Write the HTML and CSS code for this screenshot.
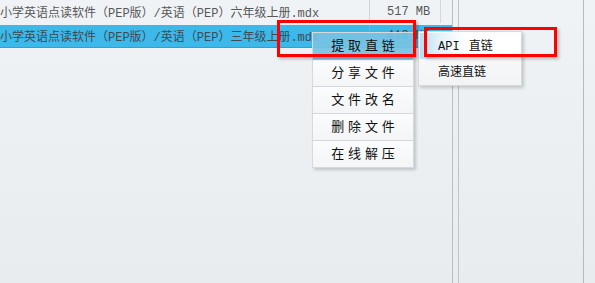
FILE: index.html
```html
<!DOCTYPE html>
<html lang="zh-CN">
<head>
<meta charset="utf-8">
<link rel="stylesheet" href="styles.css">
</head>
<body>
<div class="window">
  <div class="list">
    <div class="row">
      <div class="cell name">小学英语点读软件（PEP版）/英语（PEP）六年级上册.mdx</div>
      <div class="cell size">517 MB</div>
      <div class="cell extra"></div>
    </div>
    <div class="row selected">
      <div class="cell name">小学英语点读软件（PEP版）/英语（PEP）三年级上册.mdx</div>
      <div class="cell size">418 MB</div>
      <div class="cell extra"></div>
    </div>
  </div>
  <div class="gap"></div>
  <div class="panel"></div>
  <div class="scroll"></div>

  <div class="menu main-menu">
    <div class="item active">提 取 直 链</div>
    <div class="item">分 享 文 件</div>
    <div class="item">文 件 改 名</div>
    <div class="item">删 除 文 件</div>
    <div class="item">在 线 解 压</div>
  </div>
  <div class="menu sub-menu">
    <div class="sub-item active">API 直链</div>
    <div class="sub-item">高速直链</div>
  </div>
  <div class="mark mark-one"></div>
  <div class="mark mark-two"></div>
</div>
</body>
</html>
```
FILE: styles.css
```css
* { box-sizing: border-box; }
html, body { margin: 0; padding: 0; }
body {
  width: 595px;
  height: 283px;
  overflow: hidden;
  font-family: "Noto Sans CJK SC", sans-serif;
}
.window {
  position: relative;
  display: flex;
  width: 595px;
  height: 283px;
  background: linear-gradient(#eff3f6, #e8ecef);
}
.list {
  width: 453px;
  border-right: 1px solid #b9bec3;
  display: flex;
  flex-direction: column;
  gap: 2px;
}
.row {
  display: flex;
  height: 23px;
  align-items: stretch;
  color: #575757;
  font-family: "Liberation Mono", "Noto Sans CJK SC", monospace;
  font-size: 12px;
}
.cell {
  display: flex;
  align-items: center;
  white-space: nowrap;
  overflow: hidden;
  border-right: 1px solid #d2d7dc;
}
.name { width: 370px; }
.size { width: 71px; padding-left: 17px; }
.extra { width: 11px; border-right: none; }
.row.selected {
  background: #3cb8ea;
  color: #3e4b55;
  border-bottom: 1px solid #2fa2d2;
}
.row.selected .cell { border-right-color: #4fc0ec; }
.gap {
  width: 6px;
  border-right: 1px solid #bfc4c9;
}
.panel {
  width: 125px;
  border-right: 1px solid #b6bbc0;
}
.scroll { flex: 1; }

.menu {
  position: absolute;
  background: linear-gradient(#fbfcfd, #f1f3f5);
  border: 1px solid #d6dadf;
  box-shadow: 2px 2px 3px rgba(0, 0, 0, 0.18);
}
.main-menu {
  left: 312px;
  top: 32px;
  width: 102px;
  background: none;
}
.main-menu .item {
  height: 27px;
  display: flex;
  align-items: center;
  justify-content: center;
  padding-bottom: 3px;
  font-size: 13px;
  word-spacing: 1px;
  color: #111;
  background: linear-gradient(#fbfcfd, #f3f5f7);
  border-bottom: 1px solid #d3d7db;
}
.main-menu .item:last-child { border-bottom: none; height: 26px; }
.main-menu .item.active {
  background: rgba(118, 194, 226, 0.92);
  border-bottom-color: #9fcde2;
}
.sub-menu {
  left: 418px;
  top: 31px;
  width: 104px;
  height: 55px;
  padding: 1px;
}
.sub-item {
  height: 26px;
  display: flex;
  align-items: center;
  padding-left: 18px;
  padding-bottom: 3px;
  font-family: "Liberation Mono", "Noto Sans CJK SC", monospace;
  font-size: 12px;
  word-spacing: 2px;
  color: #111;
}
.sub-item.active {
  background: linear-gradient(90deg, #b8dff1 0%, #e4f3fa 20%, #ffffff 45%);
}
.mark {
  position: absolute;
  border: 3px solid #ff0000;
  box-shadow: 2px 2px 3px rgba(0, 0, 0, 0.25);
}
.mark-one {
  left: 277px;
  top: 20px;
  width: 139px;
  height: 37px;
}
.mark-two {
  left: 424px;
  top: 27px;
  width: 133px;
  height: 30px;
}
```
